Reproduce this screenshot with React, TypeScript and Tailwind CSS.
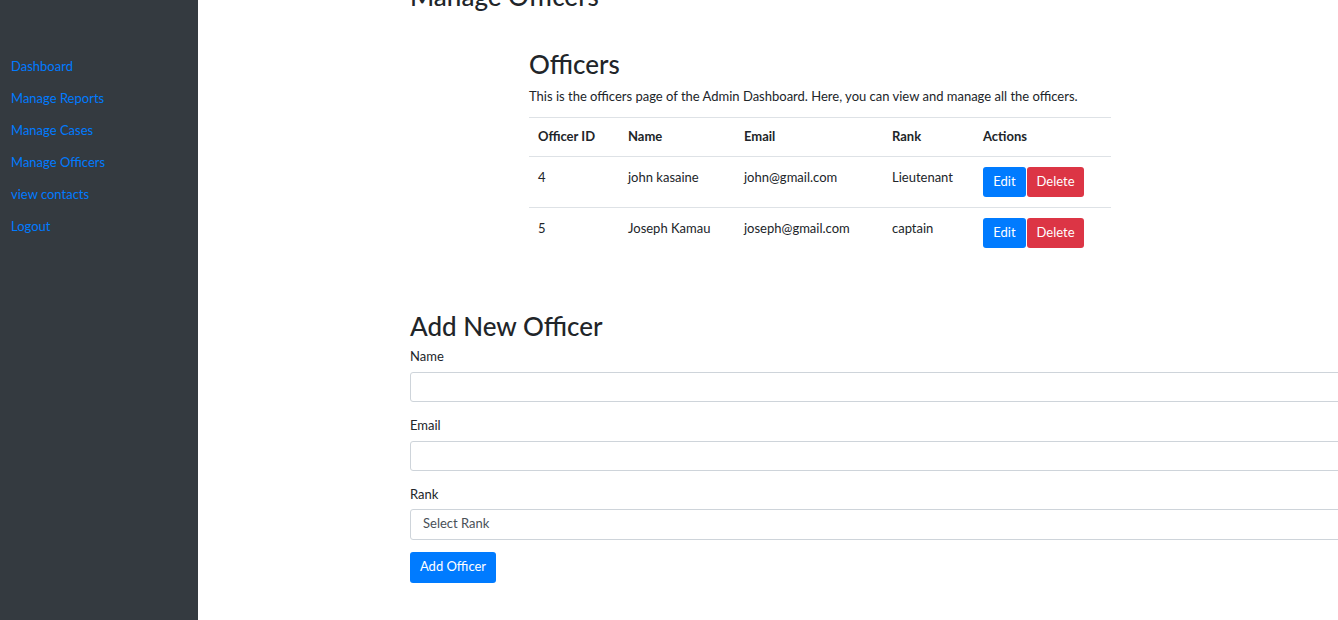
import { useState } from 'react'

const links = ['Dashboard', 'Manage Reports', 'Manage Cases', 'Manage Officers', 'view contacts', 'Logout']

const officers = [
  { id: 4, name: 'john kasaine', email: 'john@gmail.com', rank: 'Lieutenant' },
  { id: 5, name: 'Joseph Kamau', email: 'joseph@gmail.com', rank: 'captain' },
]

function Field({ label, children }: { label: string; children: React.ReactNode }) {
  return (
    <div className="mb-[13px]">
      <label className="block text-[13px] leading-[20px] mb-[6px]">{label}</label>
      {children}
    </div>
  )
}

export default function App() {
  const [rank, setRank] = useState('')

  return (
    <div className="flex h-[620px] overflow-hidden bg-white text-[#212529] font-['Lato',sans-serif]">
      {/* Sidebar */}
      <aside className="w-[198px] shrink-0 bg-[#343a40] pt-[56px] px-[11px]">
        <nav className="flex flex-col">
          {links.map((l) => (
            <a key={l} href="#" className="text-[13px] leading-[20px] h-[32px] text-[#007bff]">
              {l}
            </a>
          ))}
        </nav>
      </aside>

      {/* Main */}
      <main className="flex-1 pl-[212px] overflow-hidden">
        <h1 className="text-[26px] leading-[32px] font-medium mt-[-20px] whitespace-nowrap">Manage Officers</h1>

        <section className="ml-[119px] w-[582px] mt-[36px]">
          <h2 className="text-[26px] leading-[32px] font-medium">Officers</h2>
          <p className="text-[13px] leading-[20px] mt-[6px] mb-[11px] whitespace-nowrap">
            This is the officers page of the Admin Dashboard. Here, you can view and manage all the officers.
          </p>
          <table className="w-full text-[13px] border-collapse">
            <thead>
              <tr className="border-t border-b border-[#dee2e6] h-[39px] text-left">
                <th className="pl-[9px] w-[90px] font-bold">Officer ID</th>
                <th className="pl-[9px] w-[116px] font-bold">Name</th>
                <th className="pl-[9px] w-[148px] font-bold">Email</th>
                <th className="pl-[9px] w-[91px] font-bold">Rank</th>
                <th className="pl-[9px] font-bold">Actions</th>
              </tr>
            </thead>
            <tbody>
              {officers.map((o, i) => (
                <tr key={o.id} className={i === 0 ? 'border-b border-[#dee2e6] h-[51px]' : 'h-[51px]'}>
                  <td className="pl-[9px] align-top pt-[11px]">{o.id}</td>
                  <td className="pl-[9px] align-top pt-[11px]">{o.name}</td>
                  <td className="pl-[9px] align-top pt-[11px]">{o.email}</td>
                  <td className="pl-[9px] align-top pt-[11px]">{o.rank}</td>
                  <td className="pl-[9px] align-top pt-[10px]">
                    <div className="flex">
                      <button className="h-[30px] w-[43px] rounded-[3px] bg-[#007bff] text-white text-[13px]">Edit</button>
                      <button className="h-[30px] w-[57px] ml-[1px] rounded-[3px] bg-[#dc3545] text-white text-[13px]">Delete</button>
                    </div>
                  </td>
                </tr>
              ))}
            </tbody>
          </table>
        </section>

        <section className="mt-[51px] w-[1000px]">
          <h2 className="text-[26px] leading-[32px] font-medium mb-[4px]">Add New Officer</h2>
          <Field label="Name">
            <input className="block w-full h-[30px] rounded-[3px] border border-[#ced4da] px-[12px] text-[13px]" />
          </Field>
          <Field label="Email">
            <input type="email" className="block w-full h-[30px] rounded-[3px] border border-[#ced4da] px-[12px] text-[13px]" />
          </Field>
          <div className="mb-[12px]">
            <label className="block text-[13px] leading-[20px] mb-[5px]">Rank</label>
            <select
              value={rank}
              onChange={(e) => setRank(e.target.value)}
              className="block w-full h-[31px] rounded-[3px] border border-[#ced4da] px-[12px] text-[13px] text-[#495057] bg-white appearance-none"
            >
              <option value="">Select Rank</option>
              <option value="captain">captain</option>
              <option value="Lieutenant">Lieutenant</option>
            </select>
          </div>
          <button className="h-[31px] w-[86px] rounded-[3px] bg-[#007bff] text-white text-[13px]">Add Officer</button>
        </section>
      </main>
    </div>
  )
}
